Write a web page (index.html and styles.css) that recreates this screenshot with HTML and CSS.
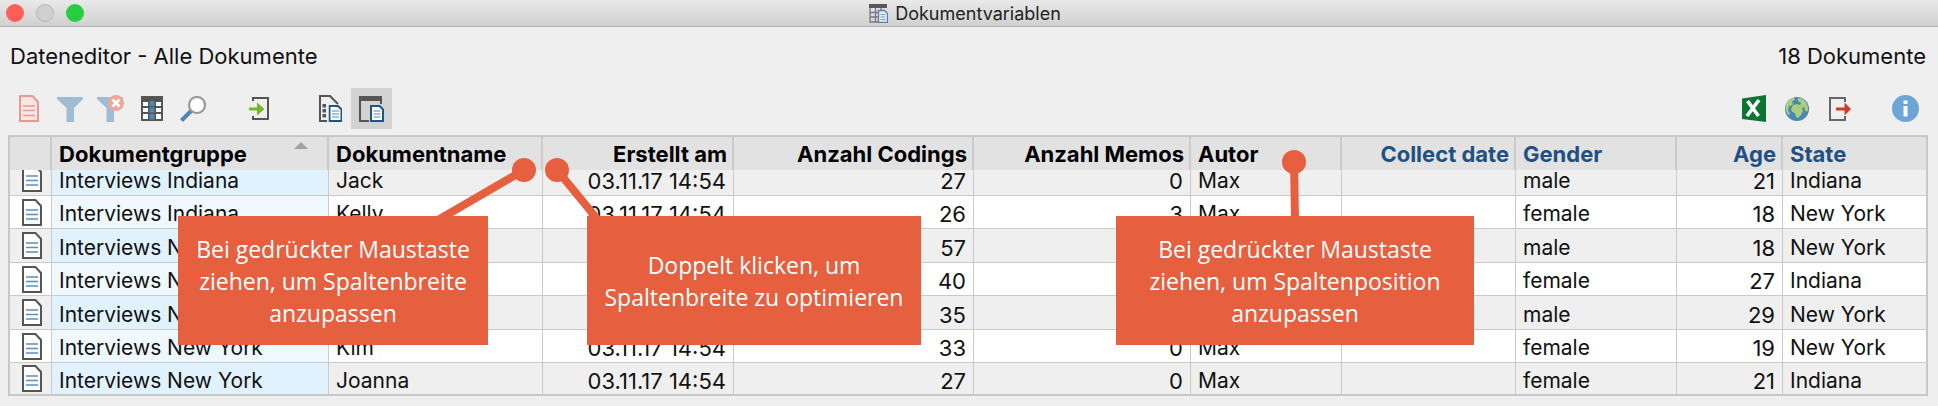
FILE: index.html
```html
<!DOCTYPE html>
<html lang="de">
<head>
    <meta charset="UTF-8">
    <meta name="viewport" content="width=device-width, initial-scale=1.0">
    <title>Dokumentvariablen</title>
    <link rel="stylesheet" href="styles.css">
</head>
<body>
    <svg class="symbols" aria-hidden="true">
        <symbol id="doc" viewBox="0 0 20 27">
            <path d="M1 1h12.500l5.500 6v19H1z" fill="#fff" stroke="#555" stroke-width="2"/>
            <path d="M4 11h12M4 15.500h12M4 20h12" stroke="#5b8fbd" stroke-width="1.500"/>
        </symbol>
        <symbol id="smalldoc" viewBox="0 0 14 17">
            <path d="M1 1h8.500l3.500 3.500V16H1z" fill="#fff" stroke="#1f5487" stroke-width="2"/>
            <path d="M3.500 6h7M3.500 9h7M3.500 12h7" stroke="#4e88b8" stroke-width="1.200"/>
        </symbol>
    </svg>

    <header class="titlebar">
        <div class="lights">
            <span class="light red"></span>
            <span class="light grey"></span>
            <span class="light green"></span>
        </div>
        <h1>
            <svg width="19" height="19" viewBox="0 0 19 19">
                <path d="M0 0h18v4H0z" fill="#5c5756"/>
                <path d="M1 4v14h8M1 8.500h8M1 13h8M6.500 4v14M12 4v3" fill="none" stroke="#777" stroke-width="1.300"/>
                <path d="M9.500 6.500h6l3 3v9h-9z" fill="#e3edf6" stroke="#5981a8" stroke-width="1.300"/>
                <path d="M11.500 10.500h5M11.500 13h5M11.500 15.500h5" stroke="#7ba3c8"/>
            </svg>
            Dokumentvariablen
        </h1>
    </header>

    <div class="info">
        <span>Dateneditor - Alle Dokumente</span>
        <span>18 Dokumente</span>
    </div>

    <div class="toolbar">
        <div class="group">
            <button type="button" aria-label="Dokument">
                <svg width="20" height="27" viewBox="0 0 20 27">
                    <path d="M1 1h12.500l5.500 6v19H1z" fill="#f8e6e4" stroke="#e39a93" stroke-width="2"/>
                    <path d="M4 11h12M4 15.500h12M4 20.500h12" stroke="#e39a93" stroke-width="1.600"/>
                </svg>
            </button>
            <button type="button" aria-label="Filter">
                <svg width="26" height="26" viewBox="0 0 26 26">
                    <path d="M0 1h26v2l-9 9v14H9.500V12L0 3z" fill="#9fbcd3"/>
                </svg>
            </button>
            <button type="button" aria-label="Filter entfernen">
                <svg width="27" height="27" viewBox="0 0 27 27">
                    <path d="M0 2h26v2l-9 9v14H9.500V13L0 4z" fill="#9fbcd3"/>
                    <circle cx="19" cy="8" r="8" fill="#efa79c"/>
                    <path d="M15.500 4.500l7 7M22.500 4.500l-7 7" stroke="#fff" stroke-width="2.600"/>
                </svg>
            </button>
            <button type="button" aria-label="Spalten">
                <svg width="22" height="25" viewBox="0 0 22 25">
                    <path d="M0 0h22v25H0z" fill="#555"/>
                    <path d="M2 6h5v4H2zM2 12h5v4H2zM2 18h5v5H2zM15 6h5v4h-5zM15 12h5v4h-5zM15 18h5v5h-5z" fill="#fff"/>
                    <path d="M8.500 5h5v5h-5zM8.500 11.500h5v5h-5zM8.500 18h5v5.500h-5z" fill="#4f89b7"/>
                </svg>
            </button>
            <button type="button" aria-label="Suchen">
                <svg width="26" height="26" viewBox="0 0 26 26">
                    <path d="M1.500 24.500l10-10" stroke="#4e86b4" stroke-width="4"/>
                    <circle cx="17" cy="9" r="8" fill="#fff" stroke="#9a9a9a" stroke-width="2.200"/>
                </svg>
            </button>
        </div>
        <div class="group import">
            <button type="button" aria-label="Importieren">
                <svg width="21" height="24" viewBox="0 0 21 24">
                    <path d="M4 4V1h15v21H4v-3" fill="none" stroke="#555" stroke-width="2"/>
                    <path d="M0 10.500h8V5.500l7.500 6.500-7.500 6.500v-5H0z" fill="#74b62c"/>
                </svg>
            </button>
        </div>
        <div class="group views">
            <button type="button" aria-label="Variablenliste">
                <svg width="23" height="27" viewBox="0 0 23 27">
                    <path d="M8 26H1V1h10l8 8" fill="none" stroke="#555" stroke-width="2"/>
                    <path d="M3.500 9h3.500v3.500H3.500zM3.500 14h3.500v3.500H3.500zM3.500 19h3.500v3.500H3.500z" fill="#555"/>
                    <use href="#smalldoc" x="9.500" y="10" width="14" height="17"/>
                </svg>
            </button>
            <button type="button" class="active" aria-label="Dateneditor">
                <svg width="25" height="26" viewBox="0 0 25 26">
                    <path d="M0 0h23v5H0z" fill="#555"/>
                    <path d="M1 4v21h9M22 4v4" fill="none" stroke="#555" stroke-width="2"/>
                    <use href="#smalldoc" x="11" y="9" width="14" height="17"/>
                </svg>
            </button>
        </div>

        <div class="group export">
            <button type="button" aria-label="Excel">
                <svg width="24" height="27" viewBox="0 0 24 27">
                    <path d="M0 3.500L24 0v27L0 24z" fill="#0b7631"/>
                    <path d="M5.500 6l11 15M17 5L5 21" stroke="#fff" stroke-width="3.600"/>
                </svg>
            </button>
            <button type="button" aria-label="Web">
                <svg width="24" height="24" viewBox="0 0 24 24">
                    <circle cx="12" cy="12" r="12" fill="#4c84b5"/>
                    <path d="M1 7q3-5 8-6.500l1 2-3 2 1 3-4 2-1 4 2 3-1 2Q-1 13 1 7z" fill="#a9cf7c"/>
                    <path d="M13 1q6 0 9 6 2 5 0 8l-2-2-1-3-2 1 1 3-2 4-3 3-2-1-1-4-3-1-1-3 2-4 4-1 3 1 1-2-3-2z" fill="#a9cf7c"/>
                </svg>
            </button>
            <button type="button" aria-label="Exportieren">
                <svg width="22" height="24" viewBox="0 0 22 24">
                    <path d="M16 5V1H1v22h15v-4" fill="none" stroke="#666" stroke-width="2"/>
                    <path d="M7 10.500h8.500V5.500L22 12l-6.500 6.500v-5H7z" fill="#cb3a2b"/>
                </svg>
            </button>
        </div>
        <div class="group help">
            <button type="button" aria-label="Info">
                <svg width="27" height="27" viewBox="0 0 27 27">
                    <circle cx="13.500" cy="13.500" r="13.500" fill="#6ca6d6"/>
                    <path d="M11.500 5.500h4v3.500h-4zM11.500 11h4v10.500h-4z" fill="#fff"/>
                </svg>
            </button>
        </div>
    </div>

    <div class="table-wrap" id="tableWrap">
        <table>
            <colgroup>
                <col class="c-icon"><col class="c-group"><col class="c-name"><col class="c-created"><col class="c-codings">
                <col class="c-memos"><col class="c-author"><col class="c-date"><col class="c-gender"><col class="c-age"><col>
            </colgroup>
            <thead>
                <tr>
                    <td></td>
                    <th><span class="sorted">Dokumentgruppe</span></th>
                    <th>Dokumentname</th>
                    <th class="num">Erstellt am</th>
                    <th class="num">Anzahl Codings</th>
                    <th class="num">Anzahl Memos</th>
                    <th>Autor</th>
                    <th class="num var">Collect date</th>
                    <th class="var">Gender</th>
                    <th class="num var">Age</th>
                    <th class="var">State</th>
                </tr>
            </thead>
            <tbody>
                <tr><td><svg class="doc"><use href="#doc"/></svg></td><td>Interviews Indiana</td><td>Jack</td><td class="num">03.11.17 14:54</td><td class="num">27</td><td class="num">0</td><td>Max</td><td></td><td>male</td><td class="num">21</td><td>Indiana</td></tr>
                <tr><td><svg class="doc"><use href="#doc"/></svg></td><td>Interviews Indiana</td><td>Kelly</td><td class="num">03.11.17 14:54</td><td class="num">26</td><td class="num">3</td><td>Max</td><td></td><td>female</td><td class="num">18</td><td>New York</td></tr>
                <tr><td><svg class="doc"><use href="#doc"/></svg></td><td>Interviews New York</td><td></td><td class="num">03.11.17 14:54</td><td class="num">57</td><td></td><td></td><td></td><td>male</td><td class="num">18</td><td>New York</td></tr>
                <tr><td><svg class="doc"><use href="#doc"/></svg></td><td>Interviews New York</td><td></td><td class="num">03.11.17 14:54</td><td class="num">40</td><td></td><td></td><td></td><td>female</td><td class="num">27</td><td>Indiana</td></tr>
                <tr><td><svg class="doc"><use href="#doc"/></svg></td><td>Interviews New York</td><td></td><td class="num">03.11.17 14:54</td><td class="num">35</td><td></td><td></td><td></td><td>male</td><td class="num">29</td><td>New York</td></tr>
                <tr><td><svg class="doc"><use href="#doc"/></svg></td><td>Interviews New York</td><td>Kim</td><td class="num">03.11.17 14:54</td><td class="num">33</td><td class="num">0</td><td>Max</td><td></td><td>female</td><td class="num">19</td><td>New York</td></tr>
                <tr><td><svg class="doc"><use href="#doc"/></svg></td><td>Interviews New York</td><td>Joanna</td><td class="num">03.11.17 14:54</td><td class="num">27</td><td class="num">0</td><td>Max</td><td></td><td>female</td><td class="num">21</td><td>Indiana</td></tr>
            </tbody>
        </table>
    </div>

    <!-- Hinweise über der Tabelle -->
    <svg class="pointers" aria-hidden="true">
        <path d="M524 170L438 220M557 170l41 50M1294 162l1 58"/>
        <circle cx="524" cy="170" r="12"/>
        <circle cx="557" cy="170" r="12"/>
        <circle cx="1294" cy="162" r="12"/>
    </svg>
    <div class="callout width">Bei gedrückter Maustaste ziehen, um Spaltenbreite anzupassen</div>
    <div class="callout optimize">Doppelt klicken, um Spaltenbreite zu optimieren</div>
    <div class="callout position">Bei gedrückter Maustaste ziehen, um Spaltenposition anzupassen</div>

    <script>
        // Tabelle ans Ende scrollen
        const tableWrap = document.getElementById('tableWrap');
        tableWrap.scrollTop = tableWrap.scrollHeight;
    </script>
</body>
</html>
```

FILE: styles.css
```css
* {
    box-sizing: border-box;
}

body {
    margin: 0;
    height: 100vh;
    display: flex;
    flex-direction: column;
    position: relative;
    overflow: hidden;
    background-color: #efefef;
    color: #111;
    font-family: Inter, "Liberation Sans", sans-serif;
    font-size: 21px;
}

.symbols {
    position: absolute;
    width: 0;
    height: 0;
}

.titlebar {
    flex: none;
    display: grid;
    grid-template-columns: 1fr auto 1fr;
    align-items: center;
    height: 27px;
    padding: 0 6px;
    background: linear-gradient(#e9e9e9, #d0d0d0);
    border-bottom: 1px solid #b4b4b4;
}

.titlebar h1 {
    display: flex;
    align-items: center;
    gap: 7px;
    margin: 0;
    padding-right: 8px;
    font-size: 18px;
    font-weight: 400;
    color: #222;
}

.lights {
    display: flex;
    gap: 12px;
}

.light {
    width: 18px;
    height: 18px;
    border-radius: 50%;
}

.red {
    background-color: #ff5f57;
}

.grey {
    background-color: #d0d0d0;
    border: 1px solid #b8b8b8;
}

.green {
    background-color: #28cd41;
}

.info {
    flex: none;
    display: flex;
    justify-content: space-between;
    padding: 16px 12px 0 10px;
    font-size: 22px;
    line-height: 26px;
}

.toolbar {
    flex: none;
    display: flex;
    padding: 19px 12px 6px 8px;
}

.group {
    display: flex;
}

.import {
    margin-left: 26px;
}

.views {
    margin-left: 30px;
}

.export {
    margin-left: auto;
    gap: 2px;
}

.help {
    margin-left: 25px;
}

button {
    display: flex;
    align-items: center;
    justify-content: center;
    width: 41px;
    height: 41px;
    padding: 0;
    border: none;
    background: none;
}

button.active {
    background-color: #d2d2d2;
}

.table-wrap {
    flex: 1;
    min-height: 0;
    margin: 0 10px 10px 8px;
    border: 2px solid #c8c8c8;
    overflow-y: auto;
    scrollbar-width: none;
}

table {
    width: 100%;
    table-layout: fixed;
    border-collapse: separate;
    border-spacing: 0;
}

.c-icon { width: 42px; }
.c-group { width: 277px; }
.c-name { width: 214px; }
.c-created { width: 191px; }
.c-codings { width: 240px; }
.c-memos { width: 217px; }
.c-author { width: 151px; }
.c-date { width: 174px; }
.c-gender { width: 161px; }
.c-age { width: 106px; }

thead th, thead td {
    position: sticky;
    top: 0;
    height: 33px;
    padding: 0 5px 0 7px;
    background-color: #e2e2e2;
    border-right: 2px solid #cacaca;
    font-size: 22px;
    font-weight: 700;
    line-height: 24px;
    text-align: left;
    white-space: nowrap;
    color: #000;
}

thead .var {
    color: #1f5082;
}

.sorted {
    display: flex;
    justify-content: space-between;
}

.sorted::after {
    content: "";
    height: 0;
    margin-right: 14px;
    border: 7px solid transparent;
    border-top: none;
    border-bottom-color: #a2a2a2;
}

tbody td {
    height: 33px;
    padding: 4px 7px 0 7px;
    border-right: 1px solid #cacaca;
    border-bottom: 1px solid #cacaca;
    line-height: 24px;
    white-space: nowrap;
}

tbody tr:nth-child(odd) td {
    height: 34px;
    background-color: #efefef;
}

tbody tr:nth-child(even) td {
    background-color: #fff;
}

tbody tr:nth-child(odd) td:nth-child(2) {
    background-color: #e1f2ff;
}

tbody tr:nth-child(even) td:nth-child(2) {
    background-color: #f0f8ff;
}

tbody tr:last-child td {
    height: 31px;
    border-bottom: none;
}

tr > :last-child {
    border-right: none;
}

th.num, td.num {
    text-align: right;
}

td.num {
    font-size: 22px;
}

tbody td:first-child {
    padding: 0 0 0 12px;
}

.doc {
    display: block;
    width: 20px;
    height: 27px;
}

.pointers {
    position: absolute;
    top: 0;
    left: 0;
    width: 100%;
    height: 100%;
    pointer-events: none;
    fill: #e65f3f;
}

.pointers path {
    fill: none;
    stroke: #e65f3f;
    stroke-width: 8px;
}

.callout {
    position: absolute;
    top: 216px;
    display: flex;
    align-items: center;
    justify-content: center;
    height: 129px;
    padding: 0 12px;
    background-color: #e65f3f;
    color: #fff;
    font-family: "Open Sans", "Noto Sans", sans-serif;
    font-size: 23px;
    line-height: 32px;
    text-align: center;
}

.width {
    left: 178px;
    width: 310px;
}

.optimize {
    left: 587px;
    width: 334px;
}

.position {
    left: 1116px;
    width: 358px;
    padding: 0 24px;
}
```
